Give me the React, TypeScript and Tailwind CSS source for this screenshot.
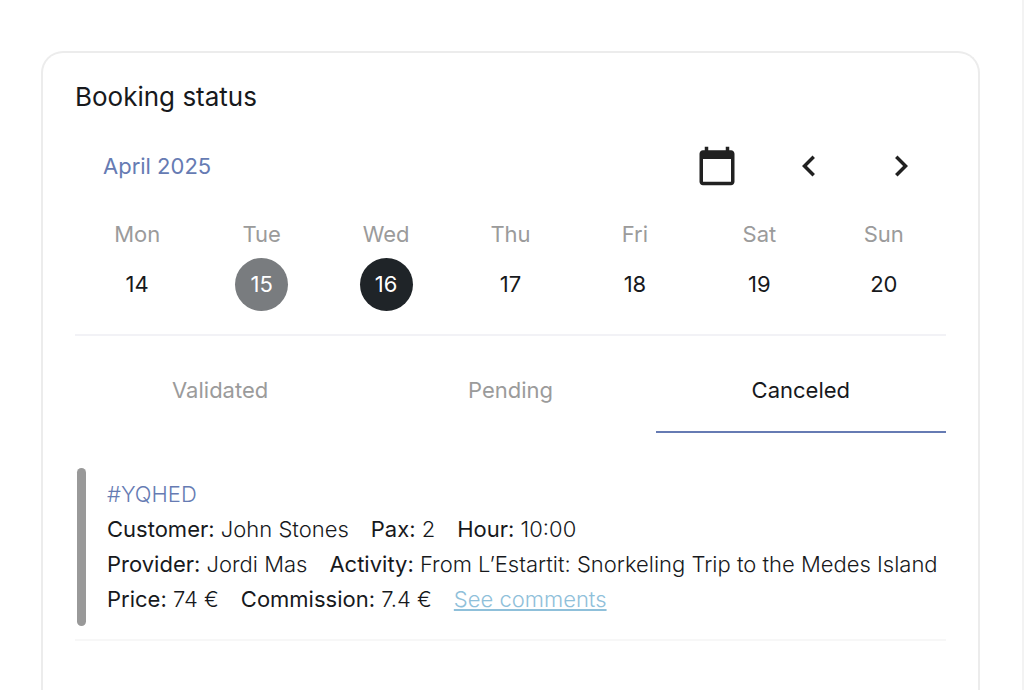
import React from 'react';
import { MdCalendarToday, MdNavigateBefore, MdNavigateNext } from 'react-icons/md';

const DAYS = [
  { name: 'Mon', date: 14 },
  { name: 'Tue', date: 15, style: 'bg-[#797c7f] text-white' },
  { name: 'Wed', date: 16, style: 'bg-[#1f2428] text-white' },
  { name: 'Thu', date: 17 },
  { name: 'Fri', date: 18 },
  { name: 'Sat', date: 19 },
  { name: 'Sun', date: 20 },
];

const TABS = ['Validated', 'Pending', 'Canceled'];

const DETAILS = [
  [
    { label: 'Customer', value: 'John Stones' },
    { label: 'Pax', value: '2' },
    { label: 'Hour', value: '10:00' },
  ],
  [
    { label: 'Provider', value: 'Jordi Mas' },
    { label: 'Activity', value: 'From L’Estartit: Snorkeling Trip to the Medes Island' },
  ],
  [
    { label: 'Price', value: '74 €' },
    { label: 'Commission', value: '7.4 €' },
  ],
];

const App: React.FC = () => {
  return (
    <div className="min-h-screen flex bg-white border-r-2 border-[#f3f3f3] pt-[51px] pl-[41px] pr-[42px] font-['Inter',sans-serif] text-[22px] text-[#17191c]">
      <section className="flex-1 min-w-0 border-2 border-b-0 border-[#ececec] rounded-t-[22px] px-[32px] pt-[28px]">
        <h1 className="text-[26px] leading-[32px]">Booking status</h1>

        <div className="mt-[31px] flex items-center justify-between pl-[28px] pr-[23px]">
          <span className="text-[#667bb3]">April 2025</span>
          <div className="flex gap-[48px] text-[#212121]">
            <button aria-label="Pick a date" className="size-[44px] flex items-center justify-center">
              <MdCalendarToday size={42} />
            </button>
            <button aria-label="Previous week" className="size-[44px] flex items-center justify-center">
              <MdNavigateBefore size={42} />
            </button>
            <button aria-label="Next week" className="size-[44px] flex items-center justify-center">
              <MdNavigateNext size={42} />
            </button>
          </div>
        </div>

        <div className="mt-[30px] grid grid-cols-7 border-b-2 border-[#f2f2f6] pb-[23px]">
          {DAYS.map((day) => (
            <div key={day.name} className="flex flex-col items-center gap-[8px]">
              <span className="leading-[32px] text-[#9b9b9b]">{day.name}</span>
              <button className={`size-[53px] rounded-full ${day.style ?? ''}`}>{day.date}</button>
            </div>
          ))}
        </div>

        <div role="tablist" className="grid grid-cols-3">
          {TABS.map((tab) => (
            <button
              key={tab}
              role="tab"
              aria-selected={tab === 'Canceled'}
              className="h-[97px] border-b-2 border-transparent pt-[14px] text-[#9b9b9b] aria-selected:border-[#667bb3] aria-selected:text-[#17191c]"
            >
              {tab}
            </button>
          ))}
        </div>

        <article className="mt-[35px] flex gap-[21px] border-b-2 border-[#f7f7f7] pb-[13px] pl-[2px]">
          <div className="w-[9px] shrink-0 rounded-full bg-[#999999]" />
          <div className="min-w-0 py-[9px] leading-[35px] whitespace-nowrap">
            <p className="text-[#667bb3] font-light">#YQHED</p>
            {DETAILS.map((row) => (
              <div key={row[0].label} className="flex gap-[22px]">
                {row.map((item) => (
                  <p key={item.label}>
                    {item.label}: <span className="font-light">{item.value}</span>
                  </p>
                ))}
                {row[0].label === 'Price' && (
                  <a href="#comments" className="font-light text-[#8fc0da] underline">
                    See comments
                  </a>
                )}
              </div>
            ))}
          </div>
        </article>
      </section>
    </div>
  );
};

export default App;
